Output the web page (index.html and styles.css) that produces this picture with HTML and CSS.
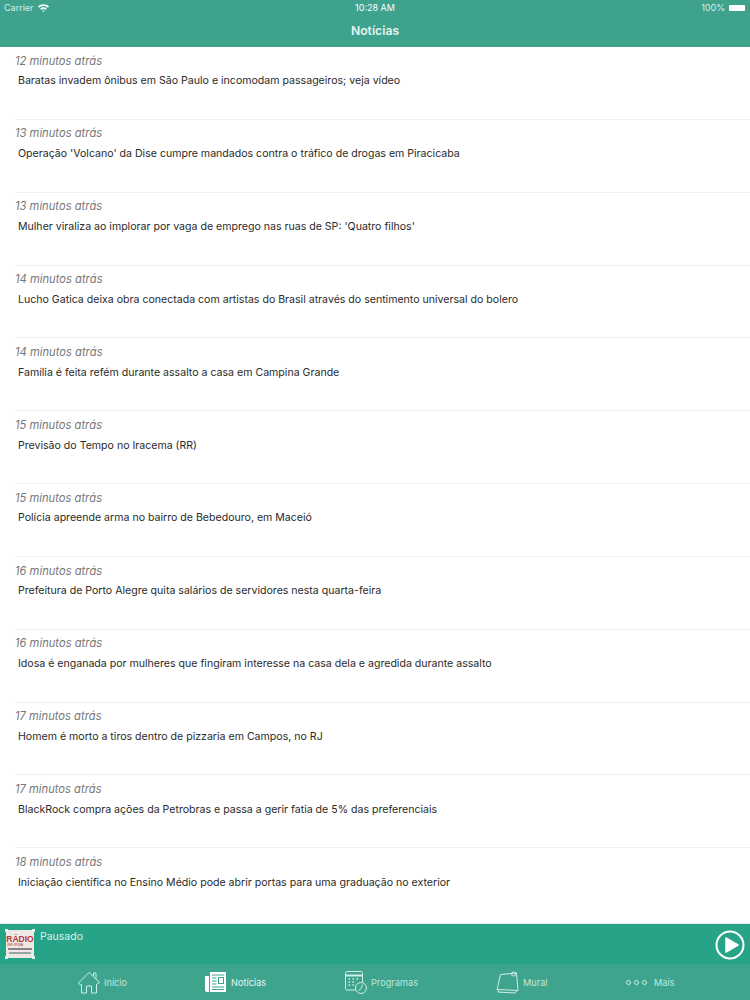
FILE: index.html
```html
<!DOCTYPE html>
<html lang="pt">
<head>
    <meta charset="UTF-8">
    <meta name="viewport" content="width=device-width, initial-scale=1.0">
    <title>Notícias</title>
    <link rel="stylesheet" href="styles.css">
</head>
<body>
    <div class="app">
        <!-- Status + nav bar -->
        <header class="top-bar">
            <div class="status-bar">
                <div class="status-left">
                    <span>Carrier</span>
                    <svg class="wifi" width="11" height="8" viewBox="0 0 11 8">
                        <path d="M0 2.6C3 -.6 8 -.6 11 2.6L9.8 3.8C7.4 1.4 3.6 1.4 1.2 3.8Z" fill="#fff"/>
                        <path d="M2.2 4.7C4 2.9 7 2.9 8.8 4.7L7.6 5.9C6.4 4.8 4.6 4.8 3.4 5.9Z" fill="#fff"/>
                        <path d="M4.3 6.9C5 6.3 6 6.3 6.7 6.9L5.5 8Z" fill="#fff"/>
                    </svg>
                </div>
                <span class="status-time">10:28 AM</span>
                <div class="status-right">
                    <span>100%</span>
                    <span class="battery"></span>
                </div>
            </div>
            <h1 class="nav-title">Notícias</h1>
        </header>

        <!-- News list -->
        <main class="news-list">
            <div class="news-row">
                <div class="news-time">12 minutos atrás</div>
                <div class="news-title">Baratas invadem ônibus em São Paulo e incomodam passageiros; veja vídeo</div>
            </div>
            <div class="news-row">
                <div class="news-time">13 minutos atrás</div>
                <div class="news-title">Operação 'Volcano' da Dise cumpre mandados contra o tráfico de drogas em Piracicaba</div>
            </div>
            <div class="news-row">
                <div class="news-time">13 minutos atrás</div>
                <div class="news-title">Mulher viraliza ao implorar por vaga de emprego nas ruas de SP: 'Quatro filhos'</div>
            </div>
            <div class="news-row">
                <div class="news-time">14 minutos atrás</div>
                <div class="news-title">Lucho Gatica deixa obra conectada com artistas do Brasil através do sentimento universal do bolero</div>
            </div>
            <div class="news-row">
                <div class="news-time">14 minutos atrás</div>
                <div class="news-title">Família é feita refém durante assalto a casa em Campina Grande</div>
            </div>
            <div class="news-row">
                <div class="news-time">15 minutos atrás</div>
                <div class="news-title">Previsão do Tempo no Iracema (RR)</div>
            </div>
            <div class="news-row">
                <div class="news-time">15 minutos atrás</div>
                <div class="news-title">Polícia apreende arma no bairro de Bebedouro, em Maceió</div>
            </div>
            <div class="news-row">
                <div class="news-time">16 minutos atrás</div>
                <div class="news-title">Prefeitura de Porto Alegre quita salários de servidores nesta quarta-feira</div>
            </div>
            <div class="news-row">
                <div class="news-time">16 minutos atrás</div>
                <div class="news-title">Idosa é enganada por mulheres que fingiram interesse na casa dela e agredida durante assalto</div>
            </div>
            <div class="news-row">
                <div class="news-time">17 minutos atrás</div>
                <div class="news-title">Homem é morto a tiros dentro de pizzaria em Campos, no RJ</div>
            </div>
            <div class="news-row">
                <div class="news-time">17 minutos atrás</div>
                <div class="news-title">BlackRock compra ações da Petrobras e passa a gerir fatia de 5% das preferenciais</div>
            </div>
            <div class="news-row">
                <div class="news-time">18 minutos atrás</div>
                <div class="news-title">Iniciação científica no Ensino Médio pode abrir portas para uma graduação no exterior</div>
            </div>
        </main>

        <!-- Player -->
        <section class="player">
            <div class="station-logo">
                <span class="logo-name">RÁDIO</span>
                <span class="logo-sub">INFORMA</span>
                <span class="logo-band"></span>
                <span class="logo-foot"></span>
                <i class="handle handle-tl"></i>
                <i class="handle handle-tr"></i>
                <i class="handle handle-bl"></i>
                <i class="handle handle-br"></i>
            </div>
            <div class="player-status">Pausado</div>
            <svg class="play-btn" width="30" height="30" viewBox="0 0 30 30">
                <circle cx="15" cy="15" r="13.5" fill="none" stroke="#fff" stroke-width="2"/>
                <path d="M11 8L23 15L11 22Z" fill="#fff" stroke="#fff" stroke-width="1.5" stroke-linejoin="round"/>
            </svg>
        </section>

        <!-- Tab bar -->
        <nav class="tab-bar">
            <div class="tab tab-inicio">
                <svg width="22" height="23" viewBox="0 0 22 23" fill="none" stroke="#cfeee6" stroke-width="1">
                    <path d="M.5 12L11 1.500L21.500 11.500L18.500 13.500V22H13.500V15H8.500V22H3.500V13.500L2.500 14Z"/>
                    <path d="M15.500 5V2H18V7.500"/>
                </svg>
                <span>Início</span>
            </div>
            <div class="tab tab-noticias">
                <svg width="22" height="21" viewBox="0 0 22 21">
                    <path d="M0 4H4V20H2C1 20 0 19 0 18Z" fill="#fff"/>
                    <rect x="5" y="0" width="16" height="20" fill="#fff"/>
                    <path d="M7 3H19M7 6H11.500M7 9H11.500M7 12H11.500M7 15H19M7 17.500H19" stroke="#3fa48e" stroke-width="1"/>
                    <rect x="13.500" y="5.500" width="5" height="6" fill="none" stroke="#3fa48e" stroke-width="1"/>
                </svg>
                <span>Notícias</span>
            </div>
            <div class="tab tab-programas">
                <svg width="22" height="23" viewBox="0 0 22 23" fill="none" stroke="#cfeee6" stroke-width="1">
                    <path d="M11 19H2C1 19 .5 18.500 .5 17.500V2C.5 1 1 .5 2 .5H16C17 .5 17.500 1 17.500 2V11"/>
                    <path d="M.5 4.500H17.500" stroke-width="2"/>
                    <path d="M3.500 8H5M7.500 8H9M11.500 8H13M3.500 11H5M7.500 11H9M3.500 14H5M7.500 14H9" stroke-width="1.500"/>
                    <circle cx="16" cy="17" r="5.500"/>
                    <path d="M17.500 13.500L16 17.500L13.500 19.500"/>
                </svg>
                <span>Programas</span>
            </div>
            <div class="tab tab-mural">
                <svg width="23" height="23" viewBox="0 0 23 23" fill="none" stroke="#cfeee6" stroke-width="1">
                    <path d="M4.500 3.500L20.500 2L22 19.500L1 18.500Z"/>
                    <path d="M2.500 19L2 21L19 22L21 19.500"/>
                    <circle cx="17.500" cy="3" r="2"/>
                </svg>
                <span>Mural</span>
            </div>
            <div class="tab tab-mais">
                <span class="dots"><i></i><i></i><i></i></span>
                <span>Mais</span>
            </div>
        </nav>
    </div>
</body>
</html>
```

FILE: styles.css
```css
* {
    box-sizing: border-box;
}
body {
    margin: 0;
    font-family: 'Inter', 'Liberation Sans', sans-serif;
    background: white;
}
.app {
    width: 750px;
    height: 1000px;
    display: flex;
    flex-direction: column;
    overflow: hidden;
}
.top-bar {
    height: 47px;
    background: #3ea28d;
    color: white;
}
.status-bar {
    height: 14px;
    padding: 1px 5px 0 4px;
    display: flex;
    justify-content: space-between;
    align-items: center;
    font-size: 9px;
    position: relative;
    color: #d8efe9;
}
.status-left, .status-right {
    display: flex;
    align-items: center;
    gap: 4px;
}
.status-time {
    color: white;
    position: absolute;
    left: 0;
    right: 0;
    text-align: center;
}
.battery {
    width: 16px;
    height: 6px;
    background: white;
    border-radius: 1px;
}
.nav-title {
    margin: 9px 0 0;
    font-size: 12.2px;
    font-weight: 600;
    line-height: 15px;
    text-align: center;
    color: #e4f5f0;
}
.news-list {
    height: 877px;
    padding-left: 15px;
    border-bottom: 1px solid #e6f1ee;
}
.news-row {
    height: 72.85px;
    padding-top: 6.6px;
    border-bottom: 1px solid #efefef;
}
.news-row:last-child {
    border-bottom: none;
}
.news-time {
    font-size: 11.2px;
    font-style: italic;
    line-height: 15px;
    color: #777;
}
.news-title {
    margin: 4.7px 0 0 3px;
    font-size: 10.58px;
    line-height: 15px;
    color: #2b2b2b;
}
.player {
    height: 40px;
    background: #27a387;
    display: flex;
    position: relative;
}
.station-logo {
    width: 28px;
    height: 28px;
    margin: 6px 0 0 6px;
    background: #efe9e6;
    display: flex;
    flex-direction: column;
    align-items: center;
    font-family: 'Liberation Sans', sans-serif;
    position: relative;
}
.logo-name {
    margin-top: 5px;
    font-size: 8.5px;
    line-height: 8px;
    font-weight: bold;
    color: #b5383a;
}
.logo-sub {
    font-size: 3.5px;
    line-height: 4px;
    color: #b5383a;
    align-self: flex-start;
    margin-left: 1px;
}
.logo-band {
    width: 24px;
    height: 2px;
    margin-top: 1px;
    background: #8d7f86;
}
.logo-foot {
    width: 22px;
    height: 2px;
    margin-top: 2px;
    background: #9aa6a6;
}
.handle {
    position: absolute;
    width: 3px;
    height: 3px;
    background: #dff3ee;
}
.handle-tl { left: -1px; top: -1px; }
.handle-tr { right: -1px; top: -1px; }
.handle-bl { left: -1px; bottom: -1px; }
.handle-br { right: -1px; bottom: -1px; }
.player-status {
    margin: 6px 0 0 6px;
    font-size: 10.5px;
    line-height: 14px;
    color: #d9f2ec;
}
.play-btn {
    position: absolute;
    right: 5px;
    top: 6px;
}
.tab-bar {
    height: 36px;
    background: #3fa48e;
    position: relative;
    font-size: 9.2px;
    color: #bfe6dc;
}
.tab {
    display: flex;
    align-items: center;
    gap: 4px;
    position: absolute;
    top: 7px;
    height: 23px;
}
.tab-inicio { left: 78px; }
.tab-noticias { left: 205px; color: #e4f5f0; }
.tab-programas { left: 345px; }
.tab-mural { left: 496px; }
.tab-mais { left: 626px; }
.dots {
    display: flex;
    gap: 3px;
    margin-right: 3px;
}
.dots i {
    width: 5px;
    height: 5px;
    border: 1.5px solid #cfeee6;
    border-radius: 50%;
}
```
